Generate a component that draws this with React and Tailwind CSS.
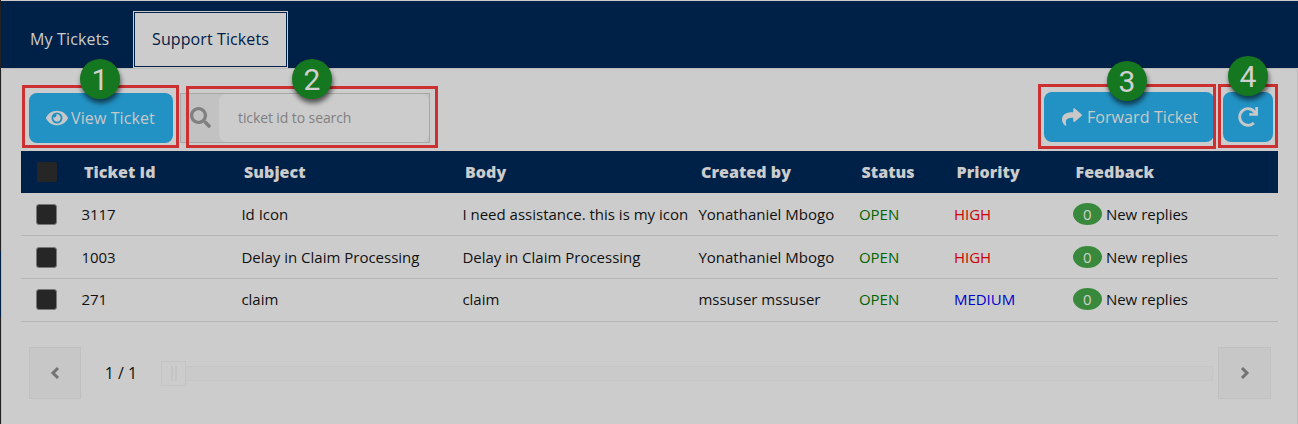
import { FaEye, FaSearch, FaShare, FaRedo } from "react-icons/fa";

const headers = ["Ticket Id", "Subject", "Body", "Created by", "Status", "Priority", "Feedback"];

const tickets = [
  { id: "3117", subject: "Id Icon", body: "I need assistance. this is my icon", by: "Yonathaniel Mbogo", priority: "HIGH" },
  { id: "1003", subject: "Delay in Claim Processing", body: "Delay in Claim Processing", by: "Yonathaniel Mbogo", priority: "HIGH" },
  { id: "271", subject: "claim", body: "claim", by: "mssuser mssuser", priority: "MEDIUM" },
];

const grid = "grid grid-cols-[60.4px_160px_221px_236px_160.5px_95px_119px_1fr] items-center";

function Chevron({ flip }) {
  return (
    <svg viewBox="0 0 10 14" className={`h-[14px] w-[10px] ${flip ? "rotate-180" : ""}`} fill="none" stroke="currentColor" strokeWidth="3">
      <path d="M8 2 3 7l5 5" />
    </svg>
  );
}

function Callout({ n, box, dot }) {
  return (
    <>
      <div className={`absolute border-[3px] border-[#cc3030] ${box}`} />
      <div
        className={`absolute flex size-10 items-center justify-center rounded-full bg-[#15771f] pt-[2px] font-[Roboto,sans-serif] text-[30px] leading-none text-[#d0d0d0] shadow-[1px_4px_5px_rgba(0,0,0,0.6)] ${dot}`}
      >
        {n}
      </div>
    </>
  );
}

export default function App() {
  return (
    <div className="relative flex h-[424px] w-[1298px] overflow-hidden bg-[#cccccc] font-['Open_Sans','Noto_Sans',sans-serif] text-[#111111]">
      <div className="flex w-px shrink-0 flex-col bg-[#222222] pt-[251px]">
        <div className="h-[66px] bg-[#002147]" />
      </div>
      <div className="flex min-w-0 flex-1 flex-col pt-px">
        <nav className="flex h-[67px] shrink-0 items-end bg-[#002147] text-[16px]">
          <div className="flex h-[57px] w-[132px] items-center pb-[2px] pl-[29px] text-[#cccccc]">
            <span className="tracking-[0.15px] whitespace-nowrap">My Tickets</span>
          </div>
          <div className="h-[57px] w-[155px] bg-[#cccccc] p-px">
            <div className="flex h-full items-center justify-center border border-[#002147] pb-[2px] text-[#002147]">
              <span className="tracking-[0.1px] whitespace-nowrap">Support Tickets</span>
            </div>
          </div>
        </nav>

        <main className="flex min-h-0 flex-1 flex-col rounded-t-[4px] border border-b-0 border-[#bcbcbc] pr-[19px] pl-[19px]">
          <div className="flex h-[82px] shrink-0 items-start pt-[23px] pr-[5px] pl-2">
            <button className="mt-px flex h-[50px] w-[144px] items-center justify-center gap-[3px] rounded-lg bg-[#2292c4] pr-px text-[16px] tracking-[0.1px] whitespace-nowrap text-[#c8c8c8]">
              <FaEye className="size-[22px]" />
              View Ticket
            </button>
            <div className="mt-px ml-[7px] flex h-[50px] w-[250px] border border-[#a8a8a8] bg-[#c2c2c2]">
              <div className="flex w-[38px] items-center justify-center pb-px text-[#808080]">
                <FaSearch className="size-[21px]" />
              </div>
              <div className="flex flex-1 items-center rounded-lg bg-[#cccccc] pb-px pl-[19px] text-[14px] tracking-[-0.1px] text-[#808080]">
                ticket id to search
              </div>
            </div>
            <button className="ml-auto flex h-[50px] w-[170px] items-center justify-center gap-[5px] rounded-lg bg-[#2292c4] pl-[2px] text-[16px] tracking-[0.1px] whitespace-nowrap text-[#c8c8c8]">
              <FaShare className="size-5" />
              Forward Ticket
            </button>
            <button className="ml-[9px] flex size-[50px] items-center justify-center rounded-lg bg-[#2292c4] text-[#c8c8c8]">
              <FaRedo className="size-5" />
            </button>
          </div>

          <div className={`${grid} h-[42px] shrink-0 bg-[#002147] text-[16px] font-extrabold tracking-[0.05px] text-[#cccccc]`}>
            <div className="pb-px pl-4">
              <div className="size-5 rounded-[2px] bg-[#262626]" />
            </div>
            {headers.map((h) => (
              <div key={h} className="pl-[2.6px] whitespace-nowrap">
                {h}
              </div>
            ))}
          </div>

          {tickets.map((t) => (
            <div key={t.id} className={`${grid} h-[43px] shrink-0 border-b border-[#b5b5b5] text-[15px] whitespace-nowrap last-of-type:pb-0 ${t.id === "271" ? "pb-[2px]" : ""}`}>
              <div className="pl-[15px]">
                <div className="size-[21px] rounded-[3px] border border-[#777777] bg-[#262626]" />
              </div>
              <div>{t.id}</div>
              <div>{t.subject}</div>
              <div>{t.body}</div>
              <div>{t.by}</div>
              <div className="text-[#006400]">OPEN</div>
              <div className={t.priority === "HIGH" ? "text-[#cc0000]" : "text-[#0000cc]"}>{t.priority}</div>
              <div className="flex items-center gap-1">
                <span className="flex h-[22px] w-[29px] items-center justify-center rounded-[50%] bg-[#38893b] text-[#d0d0d0]">0</span>
                New replies
              </div>
            </div>
          ))}

          <div className="mt-[25px] flex h-[52px] shrink-0 items-center pr-[7px] pl-2">
            <button className="flex size-[52px] shrink-0 items-center justify-center border border-[#c0c0c0] bg-[#c7c7c7] text-[#737373]">
              <Chevron />
            </button>
            <span className="w-[80px] text-center text-[16px] whitespace-nowrap">1 / 1</span>
            <div className="flex size-[25px] shrink-0 items-center justify-center gap-[2px] border border-[#c4c4c4] bg-[#cccccc]">
              <i className="h-[15px] w-[2px] bg-[#c4c4c4]" />
              <i className="h-[15px] w-[2px] bg-[#c4c4c4]" />
            </div>
            <div className="mr-[5px] h-[15px] flex-1 border border-l-0 border-[#c6c6c6] bg-[#cacaca]" />
            <button className="flex h-[52px] w-[53px] shrink-0 items-center justify-center border border-[#c0c0c0] bg-[#c7c7c7] text-[#737373]">
              <Chevron flip />
            </button>
          </div>
        </main>
      </div>

      <Callout n="1" box="left-[22px] top-[85px] h-[63px] w-[157px]" dot="left-[80px] top-[59px]" />
      <Callout n="2" box="left-[186px] top-[86px] h-[62px] w-[252px]" dot="left-[292px] top-[59px]" />
      <Callout n="3" box="left-[1038px] top-[84px] h-[65px] w-[178px]" dot="left-[1107px] top-[61px]" />
      <Callout n="4" box="left-[1218px] top-[84px] h-[64px] w-[60px]" dot="left-[1228px] top-[56px]" />
    </div>
  );
}
